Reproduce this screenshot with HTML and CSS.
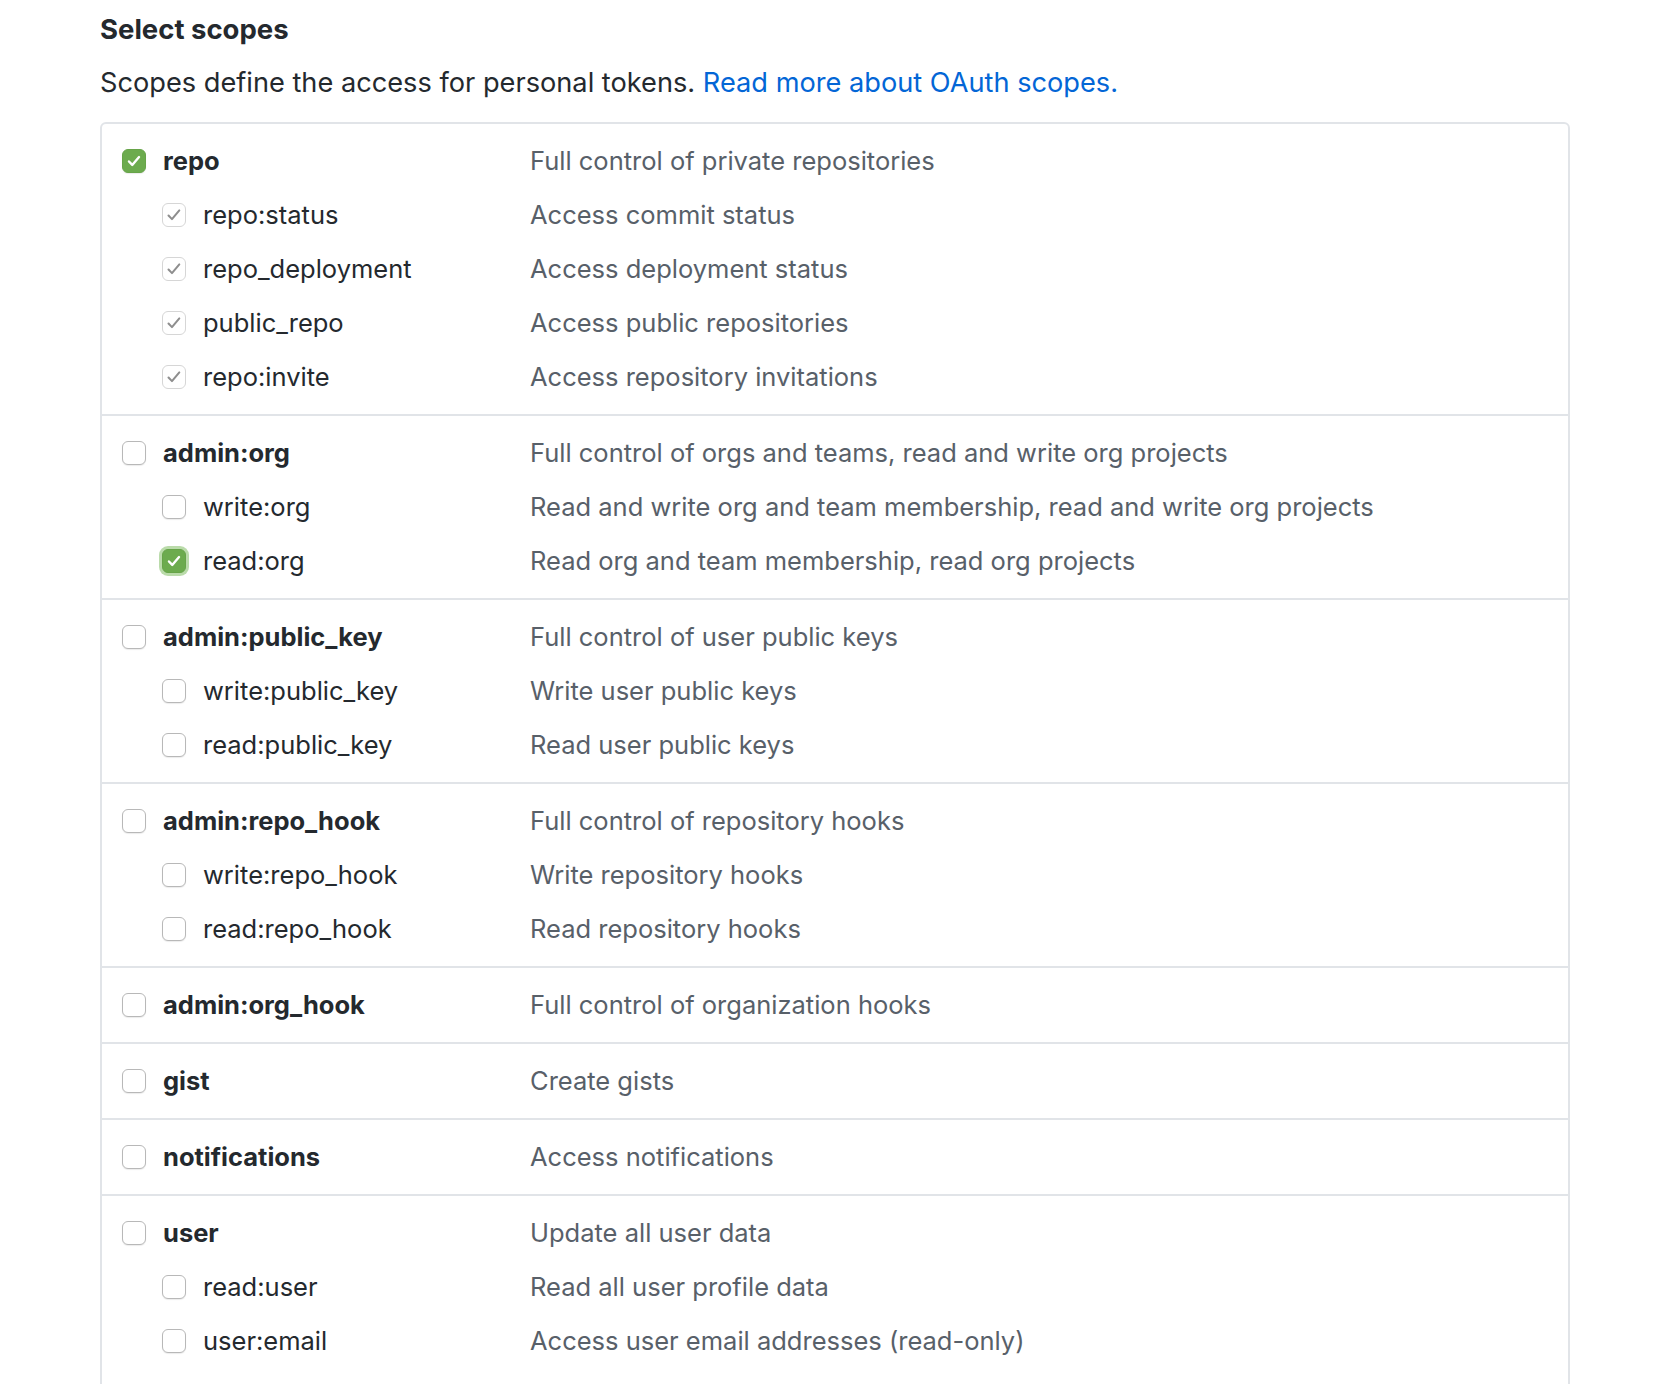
FILE: index.html
```html
<!DOCTYPE html>
<html lang="en">
<head>
<meta charset="utf-8">
<title>Select scopes</title>
<link rel="stylesheet" href="styles.css">
</head>
<body>
<div class="page">
  <h2 class="title">Select scopes</h2>
  <p class="lead">Scopes define the access for personal tokens. <a class="link" href="#">Read more about OAuth scopes.</a></p>

  <div class="scopes">
    <div class="group">
      <div class="row parent">
        <span class="cb cb-on"><svg viewBox="0 0 24 24"><path d="M6.5 12.5l3.6 3.8 7.4-8.6"/></svg></span>
        <span class="name">repo</span>
        <span class="desc">Full control of private repositories</span>
      </div>
      <div class="row child">
        <span class="cb cb-dis"><svg viewBox="0 0 24 24"><path d="M6 12.5l3.8 4 8-9.5"/></svg></span>
        <span class="name">repo:status</span>
        <span class="desc">Access commit status</span>
      </div>
      <div class="row child">
        <span class="cb cb-dis"><svg viewBox="0 0 24 24"><path d="M6 12.5l3.8 4 8-9.5"/></svg></span>
        <span class="name">repo_deployment</span>
        <span class="desc">Access deployment status</span>
      </div>
      <div class="row child">
        <span class="cb cb-dis"><svg viewBox="0 0 24 24"><path d="M6 12.5l3.8 4 8-9.5"/></svg></span>
        <span class="name">public_repo</span>
        <span class="desc">Access public repositories</span>
      </div>
      <div class="row child">
        <span class="cb cb-dis"><svg viewBox="0 0 24 24"><path d="M6 12.5l3.8 4 8-9.5"/></svg></span>
        <span class="name">repo:invite</span>
        <span class="desc">Access repository invitations</span>
      </div>
    </div>

    <div class="group">
      <div class="row parent">
        <span class="cb"></span>
        <span class="name">admin:org</span>
        <span class="desc">Full control of orgs and teams, read and write org projects</span>
      </div>
      <div class="row child">
        <span class="cb"></span>
        <span class="name">write:org</span>
        <span class="desc">Read and write org and team membership, read and write org projects</span>
      </div>
      <div class="row child">
        <span class="cb cb-on cb-focus"><svg viewBox="0 0 24 24"><path d="M6.5 12.5l3.6 3.8 7.4-8.6"/></svg></span>
        <span class="name">read:org</span>
        <span class="desc">Read org and team membership, read org projects</span>
      </div>
    </div>

    <div class="group">
      <div class="row parent">
        <span class="cb"></span>
        <span class="name">admin:public_key</span>
        <span class="desc">Full control of user public keys</span>
      </div>
      <div class="row child">
        <span class="cb"></span>
        <span class="name">write:public_key</span>
        <span class="desc">Write user public keys</span>
      </div>
      <div class="row child">
        <span class="cb"></span>
        <span class="name">read:public_key</span>
        <span class="desc">Read user public keys</span>
      </div>
    </div>

    <div class="group">
      <div class="row parent">
        <span class="cb"></span>
        <span class="name">admin:repo_hook</span>
        <span class="desc">Full control of repository hooks</span>
      </div>
      <div class="row child">
        <span class="cb"></span>
        <span class="name">write:repo_hook</span>
        <span class="desc">Write repository hooks</span>
      </div>
      <div class="row child">
        <span class="cb"></span>
        <span class="name">read:repo_hook</span>
        <span class="desc">Read repository hooks</span>
      </div>
    </div>

    <div class="group">
      <div class="row parent">
        <span class="cb"></span>
        <span class="name">admin:org_hook</span>
        <span class="desc">Full control of organization hooks</span>
      </div>
    </div>

    <div class="group">
      <div class="row parent">
        <span class="cb"></span>
        <span class="name">gist</span>
        <span class="desc">Create gists</span>
      </div>
    </div>

    <div class="group">
      <div class="row parent">
        <span class="cb"></span>
        <span class="name">notifications</span>
        <span class="desc">Access notifications</span>
      </div>
    </div>

    <div class="group">
      <div class="row parent">
        <span class="cb"></span>
        <span class="name">user</span>
        <span class="desc">Update all user data</span>
      </div>
      <div class="row child">
        <span class="cb"></span>
        <span class="name">read:user</span>
        <span class="desc">Read all user profile data</span>
      </div>
      <div class="row child">
        <span class="cb"></span>
        <span class="name">user:email</span>
        <span class="desc">Access user email addresses (read-only)</span>
      </div>
    </div>
  </div>
</div>
</body>
</html>
```

FILE: styles.css
```css
html, body {
  margin: 0;
  padding: 0;
  background: #ffffff;
}

body {
  font-family: Inter, "Noto Sans", "Liberation Sans", sans-serif;
  color: #24292e;
  overflow: hidden;
  height: 1384px;
}

.page {
  padding-left: 100px;
  width: 1470px;
}

.title {
  margin: 0;
  padding-top: 9px;
  font-size: 27.5px;
  line-height: 40px;
  font-weight: 700;
  color: #24292e;
}

.lead {
  margin: 14px 0 0;
  font-size: 27.2px;
  line-height: 40px;
  color: #24292e;
}

.link {
  color: #0366d6;
  text-decoration: none;
}

.scopes {
  margin-top: 19px;
  border: 2px solid #e1e4e8;
  border-radius: 6px;
  min-height: 1300px;
}

.group {
  padding: 9px 0 11px;
}

.group + .group {
  border-top: 2px solid #e1e4e8;
}

.row {
  display: grid;
  grid-template-columns: 408px 1fr;
  align-items: center;
  height: 54px;
  padding-left: 20px;
  font-size: 25.5px;
}

.row > .cb {
  grid-column: 1;
  grid-row: 1;
  margin-top: 2px;
}

.row > .name {
  grid-column: 1;
  grid-row: 1;
  padding-left: 41px;
}

.row > .desc {
  grid-column: 2;
  grid-row: 1;
  color: #586069;
}

.child > .cb {
  margin-left: 40px;
}

.child > .name {
  padding-left: 81px;
}

.parent > .name {
  font-weight: 650;
}

.cb {
  box-sizing: border-box;
  width: 24px;
  height: 24px;
  border: 1.5px solid #b8b8b8;
  border-radius: 6px;
  background: #ffffff;
  box-shadow: 0 1px 1px rgba(0, 0, 0, 0.08);
  display: flex;
  align-items: center;
  justify-content: center;
}

.cb svg {
  width: 22px;
  height: 22px;
  fill: none;
  stroke-width: 2.6;
  stroke-linecap: round;
  stroke-linejoin: round;
}

.cb-on {
  background: #6cab4e;
  border-color: #67a449;
}

.cb-on svg {
  stroke: #ffffff;
}

.cb-focus {
  box-shadow: 0 0 0 3px rgba(130, 190, 100, 0.55);
}

.cb-dis {
  border-color: #d6d6d6;
  box-shadow: none;
}

.cb-dis svg {
  width: 24px;
  height: 24px;
  stroke: #8e8e8e;
  stroke-width: 2.2;
}
```
